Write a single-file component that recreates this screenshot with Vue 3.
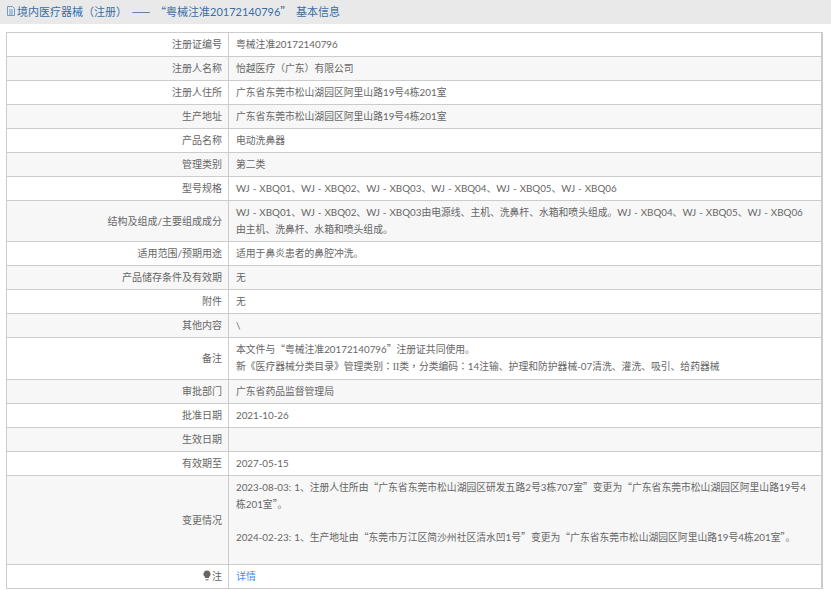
<script setup>
const rows = [
  { label: '注册证编号', lines: ['粤械注准20172140796'] },
  { label: '注册人名称', lines: ['怡越医疗（广东）有限公司'] },
  { label: '注册人住所', lines: ['广东省东莞市松山湖园区阿里山路19号4栋201室'] },
  { label: '生产地址', lines: ['广东省东莞市松山湖园区阿里山路19号4栋201室'] },
  { label: '产品名称', lines: ['电动洗鼻器'] },
  { label: '管理类别', lines: ['第二类'] },
  { label: '型号规格', lines: ['WJ - XBQ01、WJ - XBQ02、WJ - XBQ03、WJ - XBQ04、WJ - XBQ05、WJ - XBQ06'] },
  { label: '结构及组成/主要组成成分', lines: ['WJ - XBQ01、WJ - XBQ02、WJ - XBQ03由电源线、主机、洗鼻杆、水箱和喷头组成。WJ - XBQ04、WJ - XBQ05、WJ - XBQ06', '由主机、洗鼻杆、水箱和喷头组成。'] },
  { label: '适用范围/预期用途', lines: ['适用于鼻炎患者的鼻腔冲洗。'] },
  { label: '产品储存条件及有效期', lines: ['无'] },
  { label: '附件', lines: ['无'] },
  { label: '其他内容', lines: ['\\'] },
  { label: '备注', lines: ['本文件与“粤械注准20172140796”注册证共同使用。', '新《医疗器械分类目录》管理类别：II类，分类编码：14注输、护理和防护器械-07清洗、灌洗、吸引、给药器械'] },
  { label: '审批部门', lines: ['广东省药品监督管理局'] },
  { label: '批准日期', lines: ['2021-10-26'] },
  { label: '生效日期', lines: [''] },
  { label: '有效期至', lines: ['2027-05-15'] },
  { label: '变更情况', spaced: true, lines: ['2023-08-03: 1、注册人住所由“广东省东莞市松山湖园区研发五路2号3栋707室”变更为“广东省东莞市松山湖园区阿里山路19号4', '栋201室”。', '', '2024-02-23: 1、生产地址由“东莞市万江区简沙州社区清水凹1号”变更为“广东省东莞市松山湖园区阿里山路19号4栋201室”。'] }
]

const titleText = '境内医疗器械（注册） —— “粤械注准20172140796” 基本信息'

function parts(text) {
  return text.split(/([“”—（）：，]|II)/).filter(Boolean).map((t) => ({
    t,
    cls: /[“”—]/.test(t) ? 'cjk' : /[（）：，]/.test(t) ? 'mid' : t === 'II' ? 'roman' : ''
  }))
}
</script>

<template>
  <div class="page">
    <div class="title">
      <svg class="doc" viewBox="0 0 10 12" width="10" height="12">
        <path d="M1.5 1.5h5l2 2v7h-7z" fill="none" stroke="#6f9bc8" stroke-width="1" />
        <path d="M3 5h4M3 7h4M3 9h4" stroke="#6f9bc8" stroke-width="1" />
      </svg>
      <span><span v-for="(p, k) in parts(titleText)" :key="k" :class="p.cls">{{ p.t }}</span></span>
    </div>
    <table class="info">
      <tbody>
        <tr v-for="row in rows" :key="row.label">
          <td class="label">{{ row.label }}</td>
          <td class="value" :class="{ single: row.lines.length === 1, spaced: row.spaced }">
            <div v-for="(line, i) in row.lines" :key="i" class="line">
              <span v-for="(p, k) in parts(line)" :key="k" :class="p.cls">{{ p.t }}</span>
            </div>
          </td>
        </tr>
        <tr>
          <td class="label">
            <svg class="bulb" viewBox="0 0 8 11" width="8" height="11">
              <path d="M4 .5a3.5 3.5 0 0 1 2 6.4V8H2V6.9A3.5 3.5 0 0 1 4 .5z" fill="#666" />
              <path d="M2.5 9h3v1.5h-3z" fill="#999" />
            </svg>注
          </td>
          <td class="value single"><a class="link">详情</a></td>
        </tr>
      </tbody>
    </table>
  </div>
</template>

<style scoped>
.page {
  width: 831px;
  height: 591px;
  overflow: hidden;
  background: #fff;
  font-family: "Lato", "Noto Sans CJK SC", sans-serif;
  font-size: 9.8px;
  word-spacing: 0.5px;
  color: #666;
}
.title {
  height: 24px;
  background: #e9e9e9;
  padding-left: 6px;
  padding-bottom: 2px;
  box-sizing: border-box;
  display: flex;
  align-items: center;
  gap: 1px;
  font-size: 11px;
  word-spacing: 2px;
  color: #3a6ea5;
  margin-bottom: 8px;
}
.cjk { font-family: "Noto Sans CJK SC", sans-serif; }
.mid { font-family: "Noto Sans CJK TC", sans-serif; }
.roman { font-family: "Liberation Serif", serif; }
.doc { flex: none; }
.info {
  width: 817px;
  margin-left: 6px;
  border-collapse: collapse;
  border: 1px solid #ccc;
  border-right-width: 2px;
  table-layout: fixed;
}
td {
  border: 1px solid #ccc;
  padding: 0;
  line-height: 16px;
}
tr:nth-child(even) td { background: #f7f7f7; }
.label {
  width: 215px;
  text-align: right;
  padding-right: 6px;
  padding-bottom: 1px;
  font-size: 10px;
}
.value {
  padding: 3px 7px 4px;
  white-space: nowrap;
}
.line { line-height: 16.5px; min-height: 16.5px; }
.single .line { line-height: 16px; min-height: 16px; }
.spaced .line:last-child { padding-bottom: 15px; }
.bulb { vertical-align: -1px; margin-right: 1px; }
.link { color: #3f8cff; font-size: 10px; }
</style>
